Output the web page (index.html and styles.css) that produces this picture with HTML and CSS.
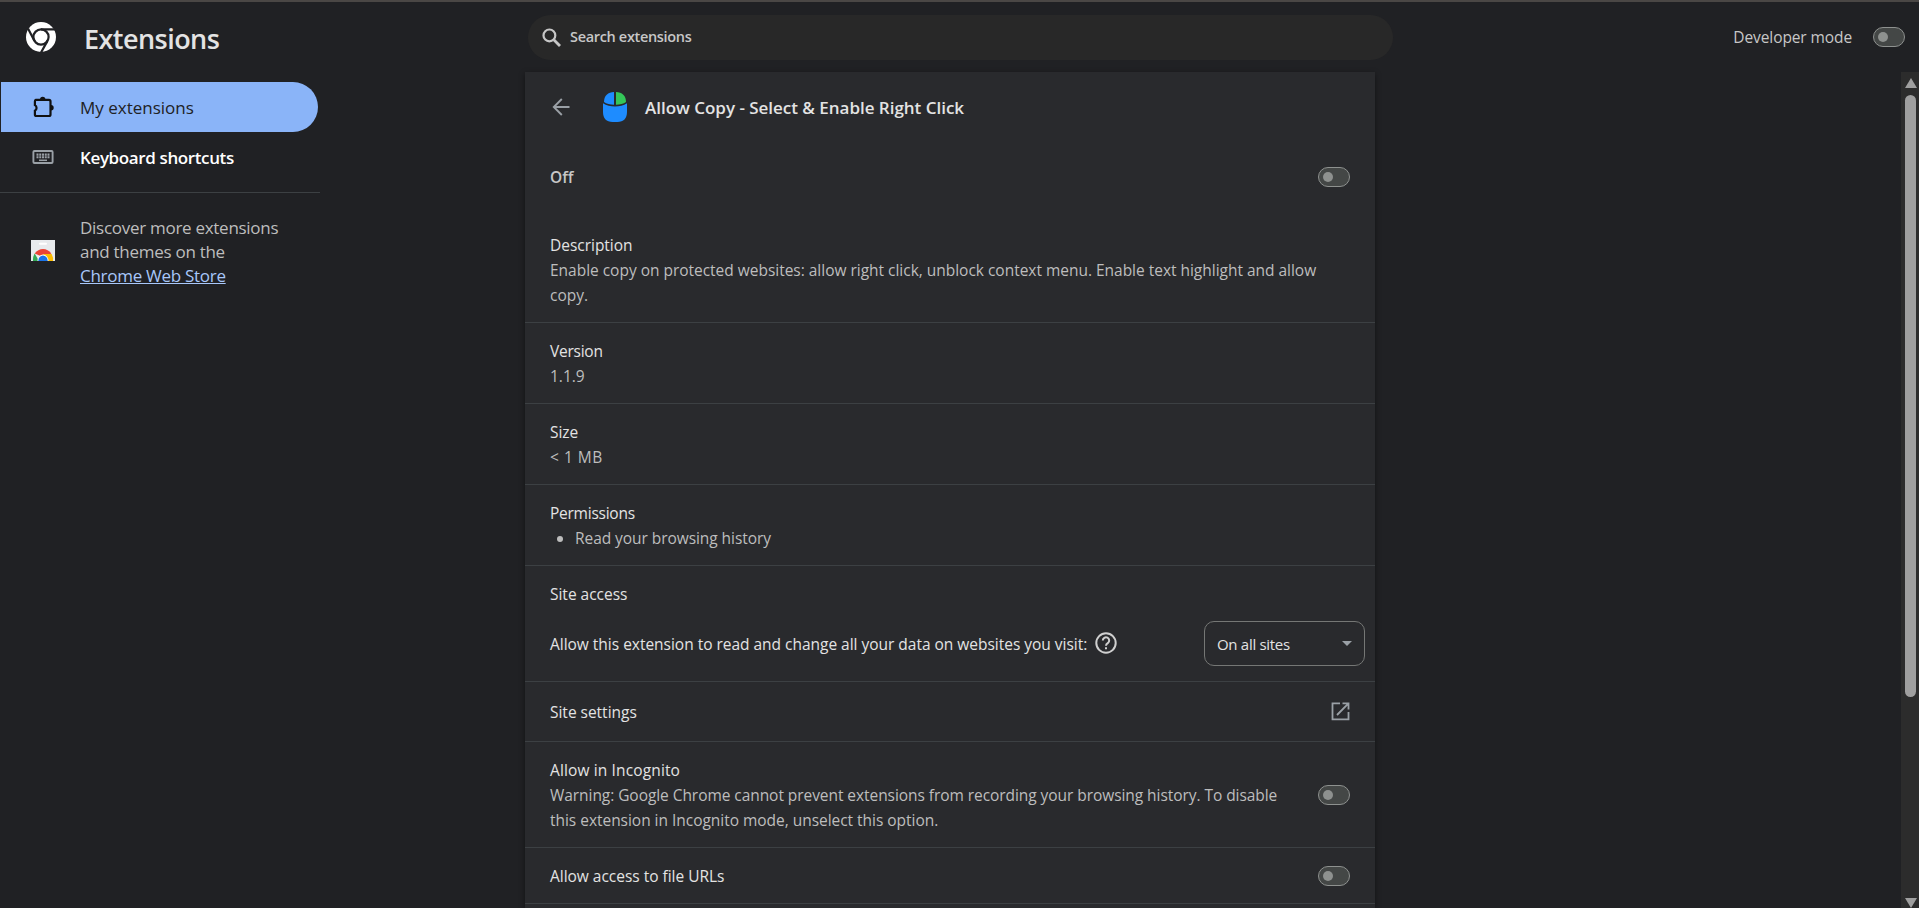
FILE: index.html
```html
<!DOCTYPE html>
<html lang="en">
<head>
<meta charset="utf-8">
<title>Extensions</title>
<link rel="stylesheet" href="styles.css">
</head>
<body>
<header class="toolbar">
  <div class="brand">
    <svg class="brand-logo" viewBox="0 0 30 30"><circle cx="15" cy="15" r="15" fill="#fff"/><g fill="none" stroke="#202124" stroke-width="2.2"><circle cx="15" cy="15" r="7.6"/><path d="M15 7.400H29M8.500 18.900L2 6.500M21.500 18.900L15 30.500"/></g></svg>
    <h1 class="brand-title">Extensions</h1>
  </div>
  <div class="search">
    <svg class="search-icon" viewBox="0 0 20 20" fill="none" stroke="#c7c7c7"><circle cx="7.4" cy="7.4" r="5.9" stroke-width="2.2"/><path d="M11.8 11.8L18 18" stroke-width="2.8"/></svg>
    <span class="search-text">Search extensions</span>
  </div>
  <div class="dev"><span class="dev-label">Developer mode</span><span class="toggle"></span></div>
</header>
<div class="body">
  <nav class="sidebar">
    <a class="nav-item nav-active">
      <svg class="nav-icon" viewBox="0 0 22 22"><path d="M3.900 3.900H17a1.500 1.500 0 0 1 1.500 1.500V18.500a1.500 1.500 0 0 1-1.500 1.500H4.400a1.500 1.500 0 0 1-1.500-1.500v-3.800a3.200 3.200 0 0 0 0-5.600V5.400a1.500 1.500 0 0 1 1-1.500z" fill="none" stroke="#111" stroke-width="2.200"/><path d="M8 3.500a2.700 2.700 0 0 1 5.400 0zM19 9a2.700 2.700 0 0 1 0 5.400z" fill="#111"/></svg>
      <span>My extensions</span>
    </a>
    <a class="nav-item nav-strong">
      <svg class="nav-icon" viewBox="0 0 22 22"><rect x="1.400" y="5" width="19.200" height="12" rx="1" fill="none" stroke="#9aa0a6" stroke-width="1.900"/><path d="M4.500 8.600h13M4.500 11.200h13" stroke="#9aa0a6" stroke-width="2.100" stroke-dasharray="2 .75"/><path d="M7 14.300h8" stroke="#9aa0a6" stroke-width="1.500"/></svg>
      <span>Keyboard shortcuts</span>
    </a>
    <div class="promo">
      <svg class="store" viewBox="0 0 24 21"><path fill="#e8eaed" d="M0 0h24v21H0z"/><rect x="8" y="2.700" width="8" height="2" rx="1" fill="#fff"/><path d="M3.700 13.500Q7 9 12 9t8.300 4.500L12 17z" fill="#ea4335"/><path d="M3.700 13.500L8 21H2q-.3-4.500 1.700-7.500z" fill="#34a853"/><path d="M12 14h8.600q2 3.500 1.400 7h-8z" fill="#fbbc04"/><path d="M6.500 21a5.500 6.500 0 0 1 11 0z" fill="#fff"/><path d="M7.300 21a4.700 5.600 0 0 1 9.400 0z" fill="#1a73e8"/></svg>
      <p class="promo-text">Discover more extensions<br>and themes on the<br><a class="promo-link">Chrome Web Store</a></p>
    </div>
  </nav>
  <main class="card">
    <div class="head">
      <svg class="back" viewBox="0 0 18 18" fill="none" stroke="#9aa0a6" stroke-width="1.900"><path d="M17.500 9H2M9.800 1L1.800 9l8 8"/></svg>
      <svg class="ext" viewBox="0 0 24 30"><path d="M11 0v12.700C7 12.700 3.500 11.800 1 10 1 3.500 5 .2 11 0z" fill="#1e8cff"/><path d="M13 0v12.700c4 0 7.500-.9 10-2.700C23 3.500 19 .2 13 0z" fill="#34c759"/><path d="M0 11.300c6.500 4.300 17.500 4.300 24 0V20c0 6.500-3.500 10-9.500 10h-5C3.500 30 0 26.500 0 20z" fill="#1e8cff"/></svg>
      <h2 class="title">Allow Copy - Select &amp; Enable Right Click</h2>
    </div>
    <div class="row state"><span>Off</span><span class="toggle"></span></div>
    <section class="sec desc"><h3>Description</h3><p>Enable copy on protected websites: allow right click, unblock context menu. Enable text highlight and allow<br>copy.</p></section>
    <section class="sec"><h3 class="tight">Version</h3><p>1.1.9</p></section>
    <section class="sec"><h3>Size</h3><p class="loose">&lt; 1 MB</p></section>
    <section class="sec"><h3 class="tight">Permissions</h3><ul class="perms"><li>Read your browsing history</li></ul></section>
    <section class="sec access">
      <h3>Site access</h3>
      <div class="access-row">
        <span class="access-text">Allow this extension to read and change all your data on websites you visit:</span>
        <svg class="help" viewBox="0 0 22 22" fill="none" stroke="#d0d0d0" stroke-width="2"><circle cx="11" cy="11" r="9.700"/><path d="M7.800 8.600a3.200 3.200 0 1 1 5 2.600c-1.200.8-1.800 1.300-1.800 2.500"/><path d="M11 15.200v2.100"/></svg>
        <span class="select"><span>On all sites</span><i class="caret"></i></span>
      </div>
    </section>
    <section class="sec row settings"><h3>Site settings</h3>
      <svg class="open" viewBox="0 0 19 19" fill="none" stroke="#9aa0a6" stroke-width="1.800"><path d="M9 1.400H1.500v16h16V10M11.500 1.400h6v6M17.500 1.400L6 13"/></svg>
    </section>
    <section class="sec row incog"><div class="incog-text"><h3 class="wide">Allow in Incognito</h3><p>Warning: Google Chrome cannot prevent extensions from recording your browsing history. To disable<br><span class="line-end">this extension in Incognito mode, unselect this option.</span></p></div><span class="toggle"></span></section>
    <section class="sec row files"><h3>Allow access to file URLs</h3><span class="toggle"></span></section>
    <section class="sec"></section>
  </main>
  <div class="scroll"><i class="up"></i><i class="thumb"></i><i class="down"></i></div>
</div>
</body>
</html>
```
FILE: styles.css
```css
* { box-sizing: border-box; }
body { margin: 0; height: 908px; overflow: hidden; background: #202124; color: #e3e3e3; font: 15.5px/25px "Open Sans", "Noto Sans", sans-serif; display: flex; flex-direction: column; }
h1, h2, h3, p, ul { margin: 0; padding: 0; font: inherit; }
svg { display: block; flex: none; }
.toolbar { flex: none; height: 72px; border-top: 2px solid #4a4745; display: flex; align-items: flex-start; }
.brand { width: 528px; display: flex; padding: 20px 0 0 26px; }
.brand-logo { width: 30px; height: 30px; }
.brand-title { margin: -1px 0 0 28px; font-size: 27px; font-weight: 600; letter-spacing: -.55px; line-height: 36px; }
.search { width: 865px; height: 45px; margin-top: 13px; border-radius: 23px; background: #282828; display: flex; align-items: center; padding-left: 14px; }
.search-icon { width: 20px; height: 20px; }
.search-text { margin-left: 8px; padding-bottom: 2px; font-size: 14.5px; font-weight: 600; letter-spacing: -.33px; color: #c7c7c7; }
.dev { height: 26px; margin: 22px 14px 0 auto; display: flex; align-items: center; color: #c7c7c7; letter-spacing: -.1px; }
.dev-label { margin-right: 21px; padding-top: 1px; }
.toggle { flex: none; width: 32px; height: 20px; border: 1px solid #8e918f; border-radius: 10px; background: #444746; display: flex; align-items: center; padding-left: 4px; }
.toggle::before { content: ""; width: 10px; height: 10px; border-radius: 50%; background: #8e918f; }
.body { flex: 1; min-height: 0; display: flex; }
.sidebar { width: 320px; margin-right: 205px; padding-top: 10px; }
.nav-item { height: 50px; display: flex; align-items: center; padding-left: 31px; margin-left: 1px; width: 317px; font-size: 17px; }
.nav-icon { width: 22px; height: 22px; margin-right: 26px; }
.nav-active { background: #8ab4f8; color: #202124; border-radius: 0 25px 25px 0; }
.nav-strong { color: #fff; font-weight: 600; letter-spacing: -.38px; }
.promo { margin-top: 10px; border-top: 1px solid #3c4043; padding: 23px 0 0 31px; display: flex; align-items: center; }
.store { width: 24px; height: 21px; margin: 0 25px 3px 0; }
.promo-text { font-size: 17px; line-height: 24px; letter-spacing: -.28px; color: #bdbdbd; white-space: nowrap; }
.promo-link { color: #a8c7fa; text-decoration: underline; }
.card { width: 850px; background: #292a2d; box-shadow: 0 2px 6px rgba(0,0,0,.45); overflow: hidden; }
.head { height: 70px; display: flex; align-items: center; padding-left: 27px; }
.back { width: 18px; height: 18px; }
.ext { width: 24px; height: 30px; margin-left: 33px; }
.title { margin-left: 18px; padding-top: 1px; font-size: 17px; font-weight: 600; letter-spacing: -.02px; }
.row { display: flex; align-items: center; justify-content: space-between; padding-right: 25px !important; }
.state { height: 70px; padding-left: 25px; color: #c7c7c7; font-weight: 600; }
.sec { border-top: 1px solid #3c4043; padding: 16px 25px 14px; min-height: 81px; letter-spacing: -.02px; }
.sec p, .perms { color: #bdbdbd; white-space: nowrap; }
.desc { border: 0; height: 110px; padding-top: 21px; }
.tight { letter-spacing: -.25px; }
.sec .loose { letter-spacing: .5px; }
.wide { letter-spacing: .13px; }
.perms { padding-left: 25px; letter-spacing: -.06px; }
.access { height: 116px; padding-right: 10px; }
.access-row { display: flex; align-items: center; height: 45px; margin-top: 14px; }
.access-text { padding-top: 2px; }
.help { width: 22px; height: 22px; margin: 0 0 1px 8px; }
.select { margin-left: auto; width: 161px; height: 45px; border: 1px solid #757775; border-radius: 10px; display: flex; align-items: center; justify-content: space-between; padding: 2px 12px 0; font-size: 15px; letter-spacing: -.3px; }
.caret { margin-bottom: 2px; border: 5px solid transparent; border-top-color: #9aa0a6; border-bottom: 0; }
.settings { height: 60px; min-height: 0; padding-bottom: 15px; }
.open { width: 19px; height: 19px; margin-bottom: 2px; }
.incog { height: 106px; padding-top: 15px; padding-bottom: 15px; }
.incog-text { padding-top: 2px; letter-spacing: -.06px; }
.line-end { letter-spacing: -.03px; }
.files { height: 56px; min-height: 0; padding-top: 15px; padding-bottom: 15px; }
.files h3 { padding-top: 2px; }
.scroll { margin-left: auto; width: 18px; background: #2c2c2c; display: flex; flex-direction: column; align-items: center; padding: 6px 0 0 1px; }
.up { border: 6px solid transparent; border-bottom: 10px solid #9f9f9f; border-top: 0; }
.thumb { width: 11px; height: 602px; border-radius: 6px; background: #9f9f9f; margin-top: 7px; }
.down { border: 6px solid transparent; border-top: 10px solid #9f9f9f; border-bottom: 0; margin-top: auto; }
```
